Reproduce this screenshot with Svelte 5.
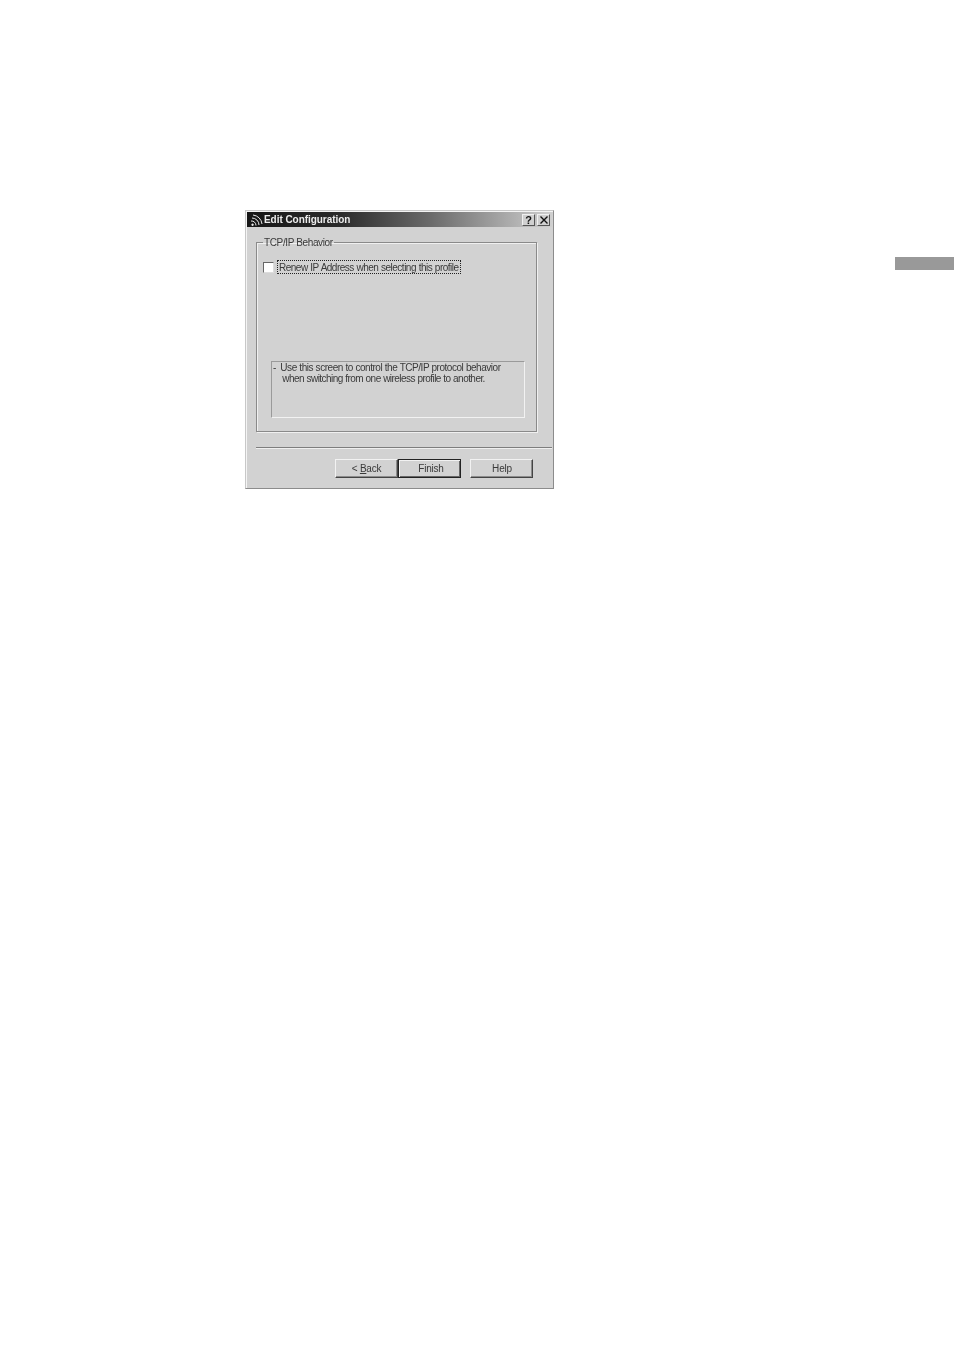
<script>
  let renew = false;
</script>

<div class="page">
  <div class="dialog">
    <div class="titlebar">
      <svg class="appicon" width="14" height="14" viewBox="0 0 14 14" fill="none" stroke="#e8e8e8" stroke-width="1">
        <path d="M2.5 10.5 a1.2 1.2 0 1 0 0.1 0" fill="#e8e8e8" stroke="none"/>
        <path d="M1 8 a4.5 4.5 0 0 1 5 4.5"/>
        <path d="M2 5 a7 7 0 0 1 7 7"/>
        <path d="M3 2 a10 10 0 0 1 9 9"/>
      </svg>
      <span class="title">Edit Configuration</span>
      <button class="capbtn help" type="button">?</button>
      <button class="capbtn close" type="button">
        <svg width="8" height="8" viewBox="0 0 8 8" stroke="#111" stroke-width="1.4"><path d="M0.5 0.5 L7.5 7.5 M7.5 0.5 L0.5 7.5"/></svg>
      </button>
    </div>

    <fieldset class="group">
      <legend>TCP/IP Behavior</legend>
      <label class="check">
        <input type="checkbox" bind:checked={renew} />
        <span class="focus">Renew IP Address when selecting this profile</span>
      </label>
      <div class="infobox">
        <span class="dash">-</span>
        <p>Use this screen to control the TCP/IP protocol behavior<br /><span class="indent">when switching from one wireless profile to another.</span></p>
      </div>
    </fieldset>

    <div class="sep"></div>

    <div class="buttons">
      <button class="btn" type="button">&lt; <u>B</u>ack</button>
      <button class="btn default" type="button">Finish</button>
      <button class="btn help-btn" type="button">Help</button>
    </div>
  </div>

  <div class="sidetab"></div>
</div>

<style>
  :global(body) { margin: 0; background: #fff; }
  .page {
    display: flex;
    align-items: flex-start;
    height: 1352px;
    box-sizing: border-box;
    padding: 210px 0 0 245px;
    font-family: "Liberation Sans", Arial, sans-serif;
    font-size: 10px;
    color: #3a3a3a;
  }
  .dialog {
    width: 309px;
    height: 279px;
    box-sizing: border-box;
    flex: none;
    background: #d2d2d2;
    border: 1px solid #8c8c8c;
    border-top-color: #c8c8c8;
    border-left-color: #c8c8c8;
    box-shadow: inset 1px 1px 0 #f4f4f4;
    padding: 1px 1px 0 1px;
    display: flex;
    flex-direction: column;
    filter: blur(0.35px);
  }
  .titlebar {
    height: 15px;
    flex: none;
    display: flex;
    align-items: center;
    background: linear-gradient(to right, #161616 0%, #2a2a2a 30%, #6a6a6a 60%, #cfcfcf 100%);
    padding: 0 2px 0 3px;
  }
  .appicon { flex: none; }
  .title {
    flex: 1;
    color: #ececec;
    font-weight: bold;
    font-size: 10px;
    letter-spacing: -0.05px;
  }
  .capbtn {
    width: 13px;
    height: 12px;
    box-sizing: border-box;
    padding: 0;
    display: flex;
    align-items: center;
    justify-content: center;
    background: #d0d0d0;
    border: 1px solid;
    border-color: #f0f0f0 #555 #555 #f0f0f0;
    font: bold 11px "Liberation Sans", Arial, sans-serif;
    color: #111;
  }
  .help { margin-right: 2px; }
  .group {
    width: 281px;
    height: 195px;
    box-sizing: border-box;
    margin: 10px 0 0 9px;
    padding: 0;
    border: 1px solid #8a8a8a;
    box-shadow: 1px 1px 0 #f0f0f0, inset 1px 1px 0 #f0f0f0;
    flex: none;
  }
  legend {
    margin-left: 6px;
    padding: 1px 1px 0;
    line-height: 10px;
    letter-spacing: -0.37px;
  }
  .check {
    display: flex;
    align-items: center;
    margin: 12px 0 0 6px;
    height: 14px;
  }
  .check input {
    appearance: none;
    width: 11px;
    height: 11px;
    margin: 0 3px 0 0;
    background: #fff;
    border: 1px solid;
    border-color: #666 #ddd #ddd #666;
    box-sizing: border-box;
  }
  .focus {
    border: 1px dotted #222;
    padding: 1px 1px 0;
    line-height: 11px;
    white-space: nowrap;
    letter-spacing: -0.5px;
    word-spacing: 0.37px;
  }
  .infobox {
    width: 254px;
    height: 57px;
    box-sizing: border-box;
    margin: 87px 0 0 14px;
    border: 1px solid #9a9a9a;
    border-right-color: #f2f2f2;
    border-bottom-color: #f2f2f2;
    display: flex;
    padding: 0 0 0 1px;
  }
  .dash { line-height: 11px; margin: 0 4px 0 0; }
  .infobox p {
    margin: 0;
    line-height: 11px;
    white-space: nowrap;
    letter-spacing: -0.47px;
    word-spacing: 0.3px;
  }
  .indent { padding-left: 2px; letter-spacing: -0.55px; }
  .sep {
    height: 1px;
    flex: none;
    margin: 15px 0 0 9px;
    background: #7e7e7e;
    box-shadow: 0 1px 0 #efefef;
  }
  .buttons {
    display: flex;
    margin: 11px 0 0 88px;
  }
  .btn {
    width: 63px;
    height: 19px;
    box-sizing: border-box;
    padding: 0;
    background: #d2d2d2;
    border: 1px solid;
    border-color: #f2f2f2 #444 #444 #f2f2f2;
    box-shadow: inset -1px -1px 0 #8c8c8c;
    font: 10px "Liberation Sans", Arial, sans-serif;
    letter-spacing: -0.2px;
    color: #3a3a3a;
  }
  .default {
    padding-left: 3px;
    border-color: #222;
    box-shadow: inset 1px 1px 0 #f2f2f2, inset -1px -1px 0 #666;
  }
  .help-btn { margin-left: 9px; padding-left: 1px; }
  .sidetab {
    flex: none;
    width: 59px;
    height: 13px;
    margin: 47px 0 0 auto;
    background: #999;
  }
</style>
